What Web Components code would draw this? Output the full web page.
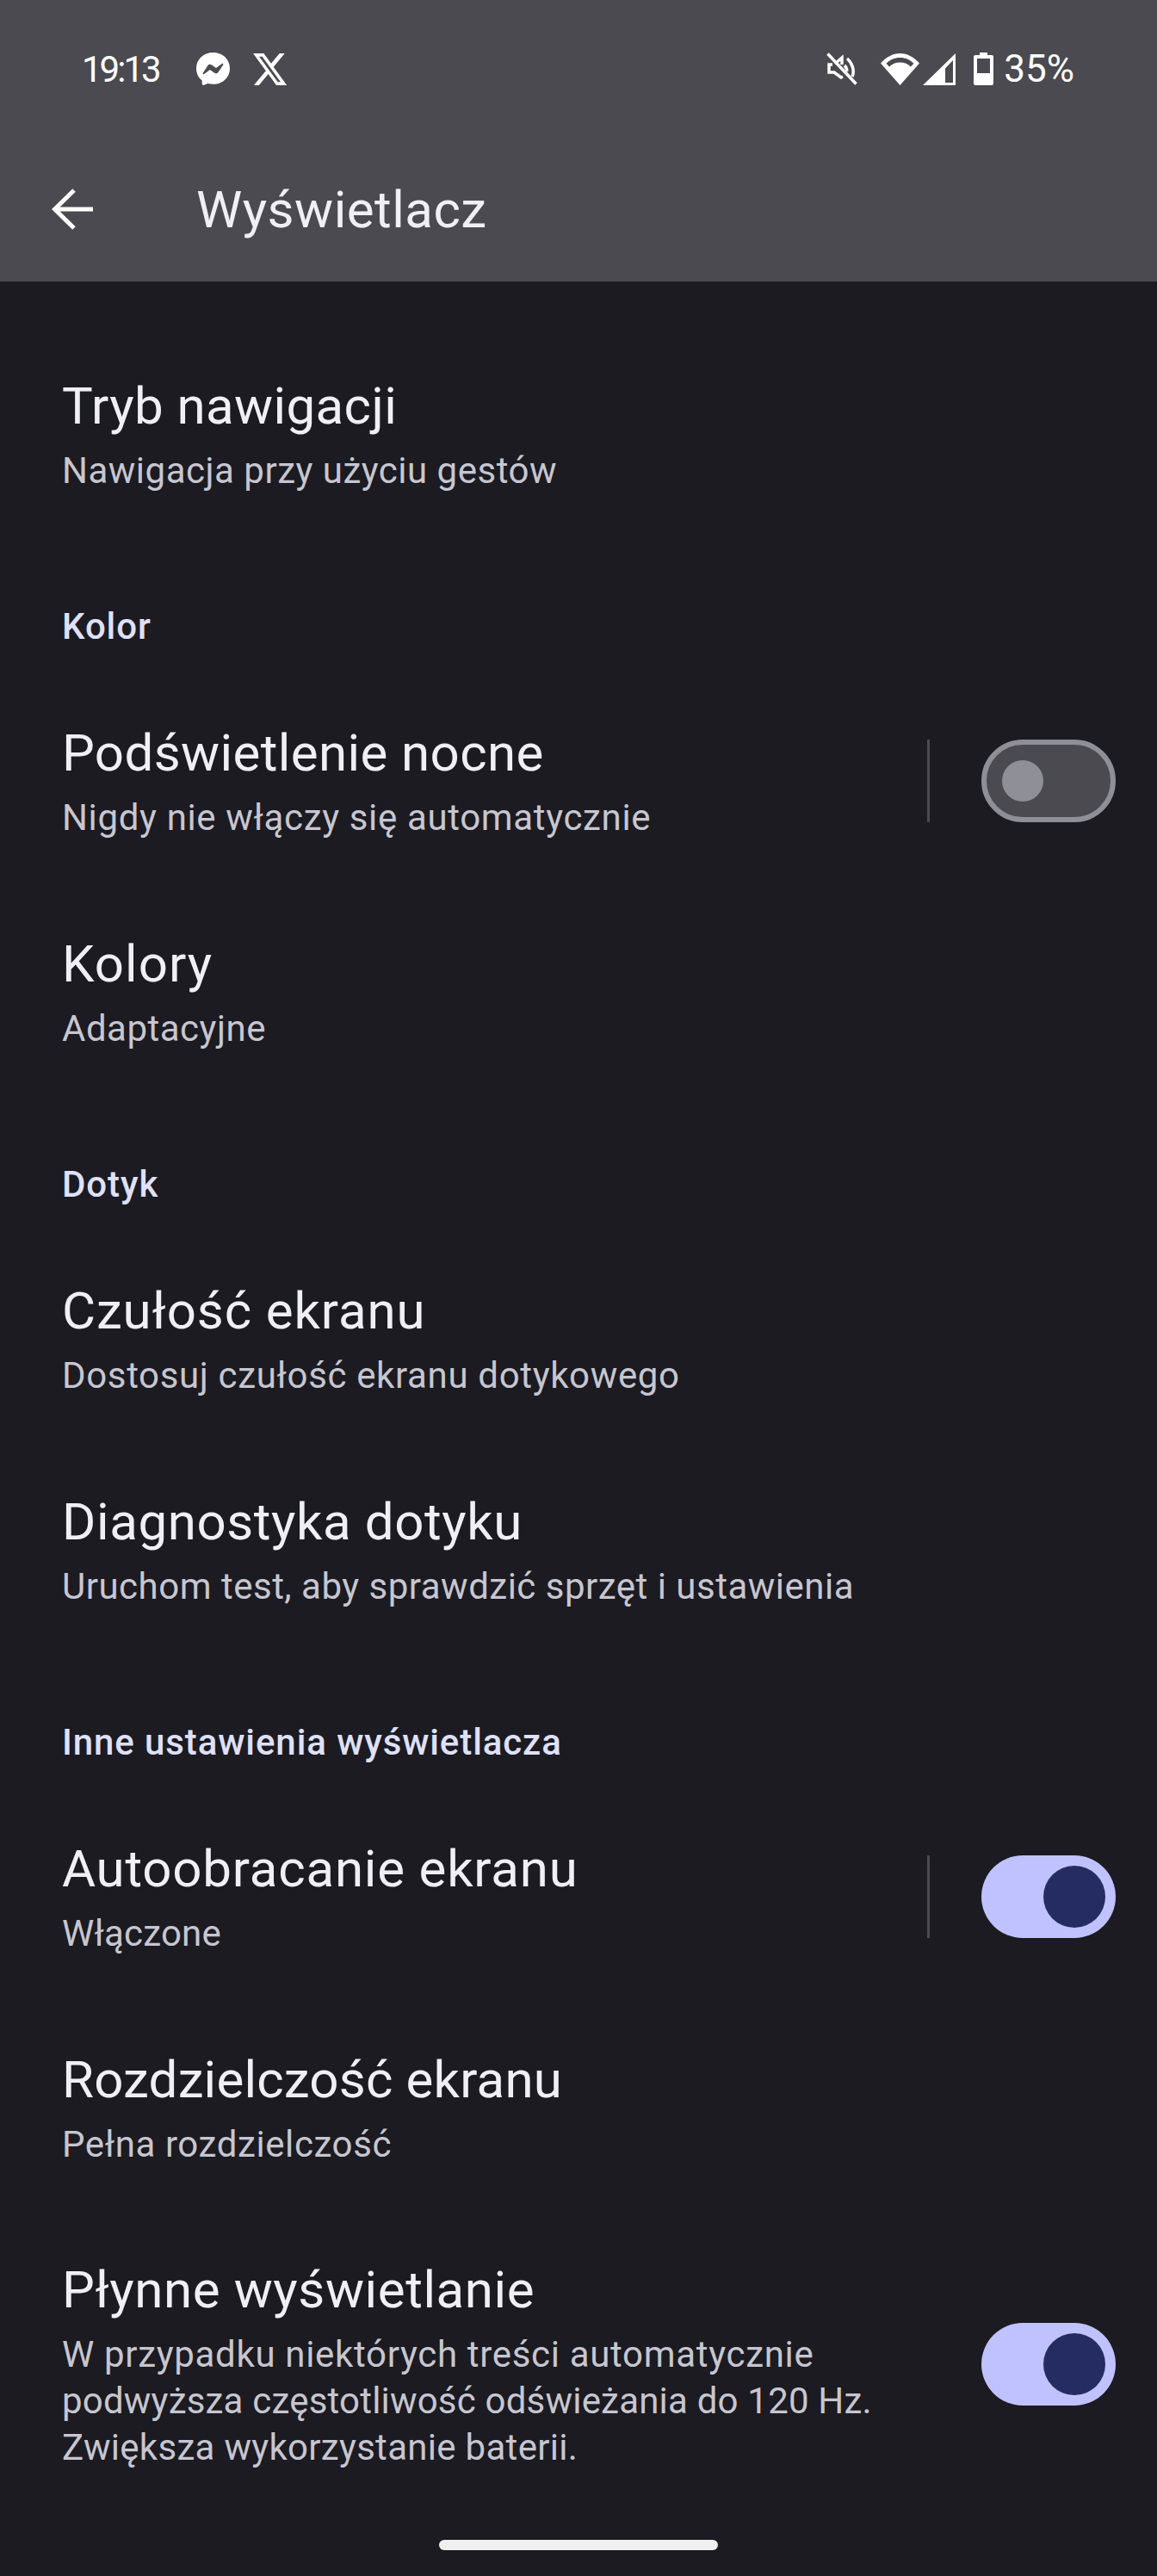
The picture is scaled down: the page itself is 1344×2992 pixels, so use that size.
<!DOCTYPE html>
<html lang="pl">
<head>
<meta charset="utf-8">
<title>Wyświetlacz</title>
<style>
  html, body { margin: 0; background: #1b1b21; }
  body { width: 1344px; height: 2992px; overflow: hidden; font-family: Roboto, "Noto Sans", sans-serif; }
  .list { display: block; padding-top: 54px; }
</style>
</head>
<body>
<top-header title-text="Wyświetlacz"></top-header>
<div class="list">
  <setting-row><span slot="title">Tryb nawigacji</span><span slot="summary">Nawigacja przy użyciu gestów</span></setting-row>
  <section-head>Kolor</section-head>
  <setting-row><span slot="title">Podświetlenie nocne</span><span slot="summary" style="letter-spacing:.65px">Nigdy nie włączy się automatycznie</span><switch-toggle slot="end" divider></switch-toggle></setting-row>
  <setting-row><span slot="title" style="letter-spacing:1px">Kolory</span><span slot="summary">Adaptacyjne</span></setting-row>
  <section-head>Dotyk</section-head>
  <setting-row><span slot="title" style="letter-spacing:.9px">Czułość ekranu</span><span slot="summary" style="letter-spacing:.65px">Dostosuj czułość ekranu dotykowego</span></setting-row>
  <setting-row><span slot="title" style="letter-spacing:.6px">Diagnostyka dotyku</span><span slot="summary">Uruchom test, aby sprawdzić sprzęt i ustawienia</span></setting-row>
  <section-head>Inne ustawienia wyświetlacza</section-head>
  <setting-row><span slot="title" style="letter-spacing:.8px">Autoobracanie ekranu</span><span slot="summary" style="letter-spacing:.2px">Włączone</span><switch-toggle slot="end" divider checked></switch-toggle></setting-row>
  <setting-row><span slot="title" style="letter-spacing:.2px">Rozdzielczość ekranu</span><span slot="summary" style="letter-spacing:.6px">Pełna rozdzielczość</span></setting-row>
  <setting-row tall><span slot="title" style="letter-spacing:.6px">Płynne wyświetlanie</span><span slot="summary"><span style="letter-spacing:.68px">W przypadku niektórych treści automatycznie</span><br><span style="letter-spacing:.2px">podwyższa częstotliwość odświeżania do 120 Hz.</span><br><span style="letter-spacing:.3px">Zwiększa wykorzystanie baterii.</span></span><switch-toggle slot="end" checked></switch-toggle></setting-row>
</div>
<gesture-pill></gesture-pill>

<script>
class TopHeader extends HTMLElement {
  constructor() {
    super();
    this.attachShadow({ mode: 'open' });
  }

  connectedCallback() {
    this.shadowRoot.innerHTML = `
      <style>
        :host { display: block; height: 327px; padding-top: 59px; box-sizing: border-box; background: #4a4a50; color: #fff; }
        .status { display: flex; align-items: center; height: 42px; padding: 0 96px 0 95px; }
        .time { font-size: 42px; width: 133px; letter-spacing: -3px; }
        .msg { width: 39px; height: 38px; margin-right: 27px; }
        .x { width: 39px; height: 37px; }
        .right { margin-left: auto; display: flex; align-items: center; }
        .pct { font-size: 44px; margin-left: 12px; }
        .bar { display: flex; align-items: center; height: 120px; padding-left: 60px; margin-top: 82px; }
        .back { width: 48px; height: 48px; margin-right: 120px; }
        h1 { margin: 0; font: 400 60px Roboto, sans-serif; letter-spacing: .5px; color: #efeff5; }
        svg { display: block; }
      </style>
      <div class="status">
        <span class="time">19:13</span>
        <svg class="msg" viewBox="2 2 20 20" preserveAspectRatio="none" fill="#fff"><path fill-rule="evenodd" d="M12 2C6.36 2 2 6.13 2 11.7c0 2.91 1.19 5.44 3.14 7.17.16.14.26.35.27.57l.05 1.78c.02.57.61.94 1.13.71l1.98-.87c.17-.08.36-.09.54-.05.91.25 1.87.39 2.89.39 5.64 0 10-4.13 10-9.7S17.64 2 12 2zm6 7.46l-2.94 4.66c-.47.74-1.47.93-2.17.4l-2.34-1.75a.6.6 0 0 0-.72 0l-3.16 2.4c-.42.32-.97-.18-.69-.63l2.94-4.66c.47-.74 1.47-.93 2.17-.4l2.34 1.75c.21.16.51.16.72 0l3.16-2.4c.42-.32.97.18.69.63z"/></svg>
        <svg class="x" viewBox="1.2 2.2 21.6 19.6" preserveAspectRatio="none" fill="#fff"><path d="M18.244 2.25h3.308l-7.227 8.26 8.502 11.24H16.17l-5.214-6.817L4.99 21.75H1.68l7.73-8.835L1.254 2.25H8.08l4.713 6.231zm-1.161 17.52h1.833L7.084 4.126H5.117z"/></svg>
        <div class="right">
          <svg width="36" height="38" viewBox="0 0 36 38" fill="none" stroke="#fff" stroke-width="3.500">
            <path d="M7 14H3v9h6l8 6 2-1" />
            <path d="M10 13l8-7v8" />
            <path d="M24 7c6 5 9 14 6 21" />
            <path d="M21 15c2 2 3 5 2.500 7" />
            <path d="M1.500 1.500L34.500 36.500" />
          </svg>
          <svg style="margin-left:27px" width="45" height="37" viewBox="0 0 45 37" fill="#fff">
            <path fill-rule="evenodd" d="M22.500 37L0 11.500C6 4.500 14 0 22.500 0S39 4.500 45 11.500zM22.500 5C16 5 10.500 7.600 6.600 11.800l3.400 3.800C13 12.300 17.500 10.500 22.500 10.500s9.500 1.800 12.500 5.100l3.400-3.800C34.500 7.600 29 5 22.500 5z"/>
          </svg>
          <svg style="margin-left:4px" width="38" height="37" viewBox="0 0 38 37" fill="#fff">
            <path fill-rule="evenodd" d="M38 0V37H0zM35 8L26 17.500V34h9z"/>
          </svg>
          <svg style="margin-left:21px" width="23" height="38" viewBox="0 0 23 38" fill="#fff">
            <path fill-rule="evenodd" d="M7 0h9v3h5a2 2 0 0 1 2 2v31a2 2 0 0 1-2 2H2a2 2 0 0 1-2-2V5a2 2 0 0 1 2-2h5zM4 7v17h15V7z"/>
          </svg>
          <span class="pct">35%</span>
        </div>
      </div>
      <div class="bar">
        <svg class="back" viewBox="0 0 48 48" fill="none" stroke="#fff" stroke-width="5"><path d="M48 24H4M26 2L3.500 24 26 46"/></svg>
        <h1>${this.getAttribute('title-text')}</h1>
      </div>
    `;
  }
}
customElements.define('top-header', TopHeader);

class SectionHead extends HTMLElement {
  constructor() {
    super();
    this.attachShadow({ mode: 'open' });
    this.shadowRoot.innerHTML = `
      <style>
        :host { display: flex; align-items: flex-end; box-sizing: border-box; height: 158px; padding: 0 72px 31px; color: #dfe0fb; font: 500 42px/50px Roboto, sans-serif; letter-spacing: .9px; }
      </style>
      <slot></slot>
    `;
  }
}
customElements.define('section-head', SectionHead);

class SettingRow extends HTMLElement {
  constructor() {
    super();
    this.attachShadow({ mode: 'open' });
    this.shadowRoot.innerHTML = `
      <style>
        :host { display: flex; align-items: center; box-sizing: border-box; height: 245px; padding: 0 48px 0 72px; }
        :host([tall]) { height: 352px; }
        .text { flex: 1; min-width: 0; }
        .title { font-size: 60px; line-height: 76px; letter-spacing: .4px; color: #efeff5; }
        .summary { font-size: 42px; line-height: 54px; letter-spacing: .5px; color: #c7c6d0; margin-top: 10px; }
      </style>
      <div class="text">
        <div class="title"><slot name="title"></slot></div>
        <div class="summary"><slot name="summary"></slot></div>
      </div>
      <slot name="end"></slot>
    `;
  }
}
customElements.define('setting-row', SettingRow);

class SwitchToggle extends HTMLElement {
  constructor() {
    super();
    this.attachShadow({ mode: 'open' });
    this.shadowRoot.innerHTML = `
      <style>
        :host { display: flex; align-items: center; flex: none; }
        .divider { display: none; width: 3px; height: 96px; background: #4a4a50; margin-right: 60px; }
        :host([divider]) .divider { display: block; }
        .track { box-sizing: border-box; display: flex; align-items: center; width: 156px; height: 96px; padding-left: 18px; border: 6px solid #8f8f98; border-radius: 48px; background: #4a4a50; }
        .thumb { width: 48px; height: 48px; border-radius: 50%; background: #8f8f98; }
        :host([checked]) .track { justify-content: flex-end; padding: 0 12px 0 0; border: 0; background: #bfc2ff; }
        :host([checked]) .thumb { width: 72px; height: 72px; background: #252c61; }
      </style>
      <div class="divider"></div>
      <div class="track"><div class="thumb"></div></div>
    `;
  }
}
customElements.define('switch-toggle', SwitchToggle);

class GesturePill extends HTMLElement {
  constructor() {
    super();
    this.attachShadow({ mode: 'open' });
    this.shadowRoot.innerHTML = `
      <style>
        :host { display: block; position: absolute; left: 510px; top: 2950px; width: 324px; height: 12px; border-radius: 6px; background: #efefef; }
      </style>
    `;
  }
}
customElements.define('gesture-pill', GesturePill);
</script>
</body>
</html>
